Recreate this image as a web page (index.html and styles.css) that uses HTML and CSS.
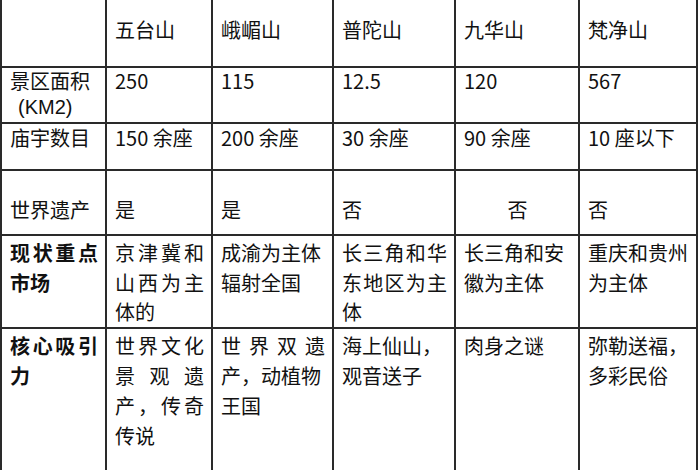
FILE: index.html
```html
<!DOCTYPE html>
<html lang="zh-CN">
<head>
<meta charset="utf-8">
<title>名山对比</title>
<link rel="stylesheet" href="styles.css">
</head>
<body>
<table class="grid">
  <colgroup>
    <col class="c0"><col class="c1"><col class="c2"><col class="c3"><col class="c4"><col class="c5">
  </colgroup>
  <tr class="r0">
    <td></td>
    <td>五台山</td>
    <td>峨嵋山</td>
    <td>普陀山</td>
    <td>九华山</td>
    <td>梵净山</td>
  </tr>
  <tr class="r1">
    <td><span class="ln">景区面积</span><span class="ln unit">(KM2)</span></td>
    <td>250</td>
    <td>115</td>
    <td>12.5</td>
    <td>120</td>
    <td>567</td>
  </tr>
  <tr class="r2">
    <td>庙宇数目</td>
    <td>150 余座</td>
    <td>200 余座</td>
    <td>30 余座</td>
    <td>90 余座</td>
    <td>10 座以下</td>
  </tr>
  <tr class="r3">
    <td>世界遗产</td>
    <td>是</td>
    <td>是</td>
    <td>否</td>
    <td class="center">否</td>
    <td>否</td>
  </tr>
  <tr class="r4">
    <td class="head"><span class="j">现状重点</span>市场</td>
    <td><span class="j">京津冀和</span><span class="j">山西为主</span>体的</td>
    <td>成渝为主体<br>辐射全国</td>
    <td><span class="j">长三角和华</span><span class="j">东地区为主</span>体</td>
    <td>长三角和安<br>徽为主体</td>
    <td>重庆和贵州<br>为主体</td>
  </tr>
  <tr class="r5">
    <td class="head"><span class="j">核心吸引</span>力</td>
    <td><span class="j">世界文化</span><span class="j">景观遗</span><span class="j">产，传奇</span>传说</td>
    <td><span class="j">世界双遗</span>产，动植物<br>王国</td>
    <td>海上仙山，<br>观音送子</td>
    <td>肉身之谜</td>
    <td>弥勒送福，<br>多彩民俗</td>
  </tr>
</table>
</body>
</html>
```

FILE: styles.css
```css
html, body {
  margin: 0;
  padding: 0;
  background: #ffffff;
}

body {
  width: 700px;
  height: 470px;
  overflow: hidden;
  font-family: "Noto Sans CJK SC", "Noto Sans", sans-serif;
  color: #111111;
}

.grid {
  border-collapse: collapse;
  table-layout: fixed;
  width: 698px;
  font-size: 20px;
}

.c0 { width: 105px; }
.c1 { width: 106px; }
.c2 { width: 121px; }
.c3 { width: 122px; }
.c4 { width: 124px; }
.c5 { width: 118px; }

.grid td {
  border: 2px solid #2a2a2a;
  vertical-align: top;
  padding: 0 7px 0 8px;
  line-height: 26px;
  text-align: left;
  overflow: hidden;
  box-sizing: border-box;
}

.grid tr.r0 td {
  border-top: none;
  height: 67px;
  padding-top: 17px;
}

.grid tr.r1 td {
  height: 56px;
  padding-top: 0;
}

.grid tr.r1 td .ln {
  display: block;
  height: 26px;
  line-height: 26px;
}

.grid tr.r1 td .unit {
  font-family: "Liberation Sans", Arial, sans-serif;
  padding-left: 8px;
}

.grid tr.r2 td {
  height: 47px;
  padding-top: 1px;
}

.grid tr.r3 td {
  height: 65px;
  padding-top: 26px;
}

.grid tr.r4 td {
  height: 90px;
  padding-top: 2px;
  line-height: 29.5px;
}

.grid tr.r5 td {
  height: 143px;
  padding-top: 2px;
  line-height: 30px;
  border-bottom: none;
}

.grid td.center {
  text-align: center;
}

.grid td.head {
  font-weight: bold;
}

.j {
  display: block;
  text-align: justify;
  text-align-last: justify;
  text-justify: inter-character;
}
```
